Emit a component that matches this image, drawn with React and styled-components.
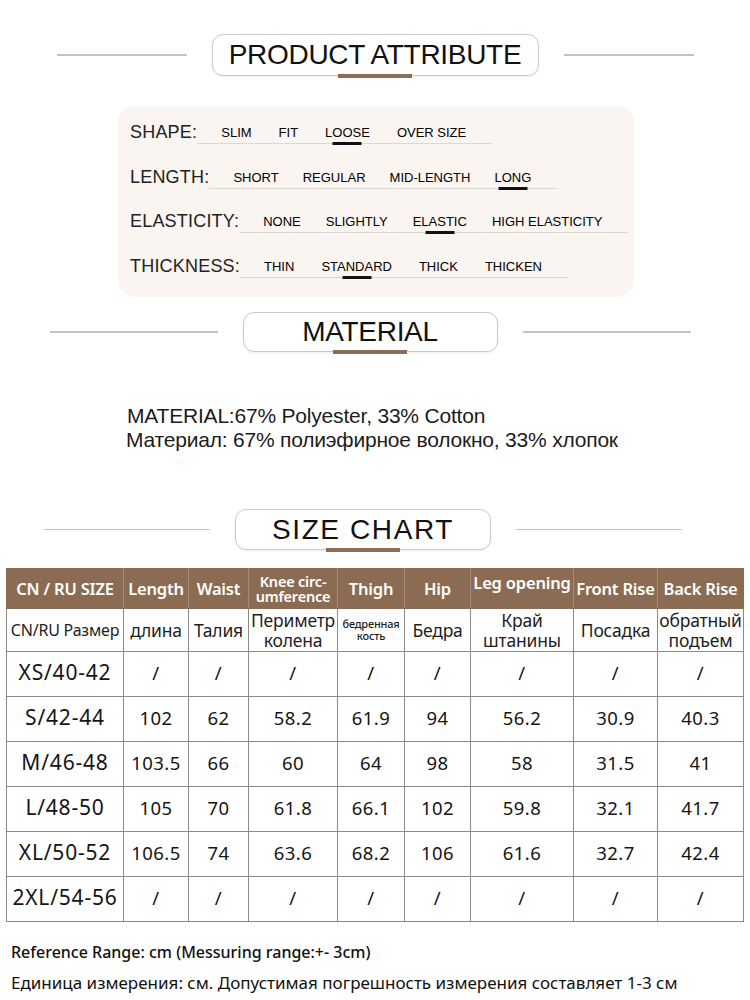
import React from "react";
import styled, { createGlobalStyle } from "styled-components";

const GlobalStyle = createGlobalStyle`
  body {
    margin: 0;
    background: #ffffff;
    font-family: "Liberation Sans", Arial, sans-serif;
    color: #1a1a1a;
  }
`;

const attributes = [
  { label: "SHAPE:", options: ["SLIM", "FIT", "LOOSE", "OVER SIZE"], picked: 2, gap: 27 },
  { label: "LENGTH:", options: ["SHORT", "REGULAR", "MID-LENGTH", "LONG"], picked: 3, gap: 24 },
  { label: "ELASTICITY:", options: ["NONE", "SLIGHTLY", "ELASTIC", "HIGH ELASTICITY"], picked: 2, gap: 25 },
  { label: "THICKNESS:", options: ["THIN", "STANDARD", "THICK", "THICKEN"], picked: 1, gap: 27 },
];

const columns = [117, 65, 60, 89, 67, 66, 103, 84, 86];

const headers = [
  "CN / RU SIZE",
  "Length",
  "Waist",
  ["Knee circ-", "umference"],
  "Thigh",
  "Hip",
  "Leg opening",
  "Front Rise",
  "Back Rise",
];

const ruHeaders = [
  "CN/RU Размер",
  "длина",
  "Талия",
  ["Периметр", "колена"],
  "small",
  "Бедра",
  ["Край", "штанины"],
  "Посадка",
  ["обратный", "подъем"],
];

const sizes = [
  ["XS/40-42", "/", "/", "/", "/", "/", "/", "/", "/"],
  ["S/42-44", "102", "62", "58.2", "61.9", "94", "56.2", "30.9", "40.3"],
  ["M/46-48", "103.5", "66", "60", "64", "98", "58", "31.5", "41"],
  ["L/48-50", "105", "70", "61.8", "66.1", "102", "59.8", "32.1", "41.7"],
  ["XL/50-52", "106.5", "74", "63.6", "68.2", "106", "61.6", "32.7", "42.4"],
  ["2XL/54-56", "/", "/", "/", "/", "/", "/", "/", "/"],
];

const Section = ({ title, boxWidth, lineWidth, shift, height, spaced }) => (
  <TitleRow $shift={shift}>
    <Rule $width={lineWidth} />
    <TitleBox $width={boxWidth} $height={height} $spaced={spaced}>
      {title}
    </TitleBox>
    <Rule $width={lineWidth} />
  </TitleRow>
);

const Lines = ({ value }) =>
  Array.isArray(value) ? (
    <>
      {value[0]}
      <br />
      {value[1]}
    </>
  ) : (
    value
  );

export default function App() {
  return (
    <Page>
      <GlobalStyle />
      <Section title="PRODUCT ATTRIBUTE" boxWidth={327} lineWidth={130} shift={0} height={42} />

      <AttrCard>
        {attributes.map((row) => (
          <AttrRow key={row.label}>
            <AttrLabel>{row.label}</AttrLabel>
            <Options $gap={row.gap}>
              {row.options.map((opt, i) => (
                <Option key={opt} $picked={i === row.picked}>
                  {opt}
                </Option>
              ))}
            </Options>
          </AttrRow>
        ))}
      </AttrCard>

      <Spacer $h={15} />
      <Section title="MATERIAL" boxWidth={255} lineWidth={168} shift={5} height={40} />

      <MaterialText>
        <div>MATERIAL:67% Polyester, 33% Cotton</div>
        <div>Материал: 67% полиэфирное волокно, 33% хлопок</div>
      </MaterialText>

      <Section title="SIZE CHART" boxWidth={256} lineWidth={166} shift={12} height={41} spaced />

      <Chart>
        <colgroup>
          {columns.map((w, i) => (
            <col key={i} style={{ width: w }} />
          ))}
        </colgroup>
        <thead>
          <tr>
            {headers.map((h, i) => (
              <HeadCell key={i} $small={Array.isArray(h)} $raise={h === "Leg opening"}>
                <Lines value={h} />
              </HeadCell>
            ))}
          </tr>
        </thead>
        <tbody>
          <RuRow>
            {ruHeaders.map((h, i) =>
              h === "small" ? (
                <RuCell key={i}>
                  <Tiny>
                    бедренная
                    <br />
                    кость
                  </Tiny>
                </RuCell>
              ) : (
                <RuCell key={i} $first={i === 0}>
                  <Lines value={h} />
                </RuCell>
              )
            )}
          </RuRow>
          {sizes.map((row) => (
            <DataRow key={row[0]}>
              {row.map((v, i) => (
                <DataCell key={i} $size={i === 0}>
                  {v}
                </DataCell>
              ))}
            </DataRow>
          ))}
        </tbody>
      </Chart>

      <Note $weight={500} $size={16} $top={18}>
        Reference Range: cm (Messuring range:+- 3cm)
      </Note>
      <Note $weight={400} $size={17} $top={7}>
        Единица измерения: см. Допустимая погрешность измерения составляет 1-3 см
      </Note>
    </Page>
  );
}

const Page = styled.div`
  width: 750px;
  padding-top: 34px;
  display: flex;
  flex-direction: column;
`;

const Spacer = styled.div`
  height: ${(p) => p.$h}px;
`;

const TitleRow = styled.div`
  display: flex;
  align-items: center;
  justify-content: center;
  gap: 25px;
  padding-right: ${(p) => p.$shift * 2}px;
`;

const Rule = styled.div`
  width: ${(p) => p.$width}px;
  height: 1.5px;
  background: #c4c4c4;
`;

const TitleBox = styled.div`
  position: relative;
  box-sizing: border-box;
  width: ${(p) => p.$width}px;
  height: ${(p) => p.$height}px;
  border: 1.5px solid #c9c9c9;
  border-radius: 11px;
  box-shadow: 0 1px 2px rgba(0, 0, 0, 0.08);
  display: flex;
  align-items: center;
  justify-content: center;
  font-family: "Liberation Sans", Arial, sans-serif;
  font-size: 28px;
  letter-spacing: ${(p) => (p.$spaced ? "1.6px" : "-0.3px")};
  color: #111;

  &::after {
    content: "";
    position: absolute;
    left: 50%;
    bottom: -3px;
    width: 74px;
    height: 4px;
    transform: translateX(-50%);
    background: #8d6e55;
  }
`;

const AttrCard = styled.div`
  margin: 30px 0 0 118px;
  width: 516px;
  height: 191px;
  box-sizing: border-box;
  padding: 4px 12px 8px;
  background: #faf5f0;
  border-radius: 16px;
  display: flex;
  flex-direction: column;
`;

const AttrRow = styled.div`
  height: 45px;
  display: flex;
  align-items: center;
`;

const AttrLabel = styled.div`
  font-size: 18px;
  color: #222;
  letter-spacing: 0.2px;
`;

const Options = styled.div`
  display: flex;
  gap: ${(p) => p.$gap}px;
  padding: 3px 26px 2px 24px;
  margin-top: 1px;
  border-bottom: 1px solid #dcd8d4;
`;

const Option = styled.span`
  position: relative;
  font-size: 13px;
  line-height: 16px;
  color: #000;
  white-space: nowrap;

  &::after {
    content: "";
    display: ${(p) => (p.$picked ? "block" : "none")};
    position: absolute;
    left: 50%;
    bottom: -4px;
    width: 29px;
    height: 3px;
    transform: translateX(-50%);
    background: #111;
  }
`;

const MaterialText = styled.div`
  margin: 52px 0 57px 127px;
  font-size: 21px;
  line-height: 24px;
  letter-spacing: -0.2px;
  color: #1c1c1c;

  div + div {
    margin-left: -1px;
  }
`;

const Chart = styled.table`
  margin: 18px 0 0 6px;
  width: 738px;
  table-layout: fixed;
  border-collapse: collapse;
  font-family: "Noto Sans", "Open Sans", sans-serif;
`;

const HeadCell = styled.th`
  height: 34px;
  padding: 0;
  background: #8b6c53;
  color: #fff;
  font-weight: 600;
  font-size: ${(p) => (p.$small ? "14.5px" : "16.5px")};
  line-height: ${(p) => (p.$small ? "15px" : "18px")};
  letter-spacing: -0.2px;
  white-space: nowrap;
  text-align: center;
  vertical-align: ${(p) => (p.$raise ? "top" : "middle")};
  padding-top: ${(p) => (p.$raise ? "5px" : "0")};
  border: 1.5px solid #8b6c53;
  border-left-color: #a68c78;
  border-right-color: #a68c78;

  &:first-child {
    border-left-color: #8b6c53;
  }
  &:last-child {
    border-right-color: #8b6c53;
  }
`;

const RuRow = styled.tr`
  height: 43px;
`;

const RuCell = styled.td`
  padding: 0;
  border: 1.5px solid #8a8a8a;
  text-align: center;
  font-size: ${(p) => (p.$first ? "16px" : "17.5px")};
  line-height: 20px;
  color: #1e1e1e;
  white-space: nowrap;
  letter-spacing: -0.2px;
`;

const Tiny = styled.span`
  display: inline-block;
  font-size: 11px;
  font-weight: 500;
  line-height: 12px;
  letter-spacing: -0.2px;
`;

const DataRow = styled.tr`
  height: 45px;
`;

const DataCell = styled.td`
  padding: 0 0 4px;
  border: 1.5px solid #8a8a8a;
  text-align: center;
  font-size: ${(p) => (p.$size ? "21px" : "18.5px")};
  letter-spacing: ${(p) => (p.$size ? "0.8px" : "0.4px")};
  color: #151515;
  white-space: nowrap;
`;

const Note = styled.div`
  margin: ${(p) => p.$top}px 0 0 11px;
  font-family: "Noto Sans", "Open Sans", sans-serif;
  font-size: ${(p) => p.$size}px;
  font-weight: ${(p) => p.$weight};
  line-height: 24px;
  color: #111;
`;
